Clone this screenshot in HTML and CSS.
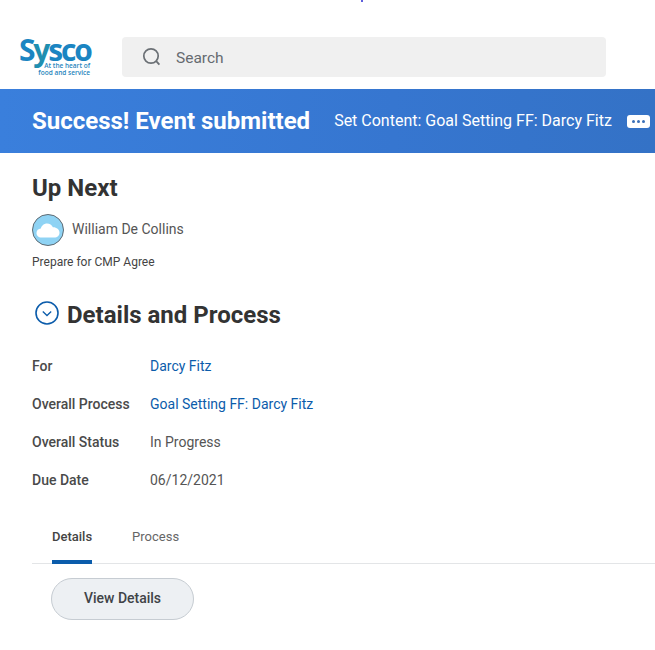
FILE: index.html
```html
<!DOCTYPE html>
<html lang="en">
<head>
<meta charset="utf-8">
<title>Success</title>
<link rel="stylesheet" href="styles.css">
</head>
<body>
<div class="page">
  <span class="speck"></span>
  <header class="top">
    <div class="logo">
      <div class="logo-word"><span class="logo-s">S</span><span class="logo-y">y</span><span class="logo-s2">sco</span></div>
      <div class="logo-tag">At the heart of<br>food and service</div>
    </div>
    <div class="search">
      <svg class="search-icon" width="20" height="20" viewBox="0 0 20 20" fill="none"><circle cx="9" cy="9" r="7.2" stroke="#6b7075" stroke-width="1.7"/><path d="M14.2 14.2L17.4 17.6" stroke="#6b7075" stroke-width="1.8"/></svg>
      <span class="search-text">Search</span>
    </div>
  </header>
  <section class="banner">
    <h1 class="banner-title">Success! Event submitted</h1>
    <span class="banner-sub">Set Content: Goal Setting FF: Darcy Fitz</span>
    <span class="more"><i></i><i></i><i></i></span>
  </section>
  <main class="content">
    <h2 class="upnext">Up Next</h2>
    <div class="person">
      <span class="avatar">
        <svg width="24" height="16" viewBox="0 0 24 16"><path d="M5.5 15.5C2.4 15.5.5 13.4.5 11c0-2.500 1.900-4.300 4.300-4.400C5.500 3.700 8 1.500 11 1.500c2.700 0 4.900 1.500 5.900 3.800 3.400-.2 6.600 2.100 6.600 5.400 0 2.800-2.200 4.800-5 4.800z" fill="#fff"/></svg>
      </span>
      <span class="person-name">William De Collins</span>
    </div>
    <p class="prepare">Prepare for CMP Agree</p>
    <div class="section-head">
      <svg class="chev" width="24" height="24" viewBox="0 0 24 24" fill="none"><circle cx="12" cy="12" r="11" stroke="#0b5cab" stroke-width="1.6"/><path d="M7.800 10.500L12 14.500L16.200 10.500" stroke="#0b5cab" stroke-width="1.300"/></svg>
      <h2 class="section-title">Details and Process</h2>
    </div>
    <dl class="fields">
      <div class="field"><dt>For</dt><dd><a class="link">Darcy Fitz</a></dd></div>
      <div class="field"><dt>Overall Process</dt><dd><a class="link">Goal Setting FF: Darcy Fitz</a></dd></div>
      <div class="field"><dt>Overall Status</dt><dd>In Progress</dd></div>
      <div class="field"><dt>Due Date</dt><dd>06/12/2021</dd></div>
    </dl>
    <nav class="tabs">
      <span class="tab active">Details</span>
      <span class="tab">Process</span>
    </nav>
    <button class="btn">View Details</button>
  </main>
</div>
</body>
</html>
```
FILE: styles.css
```css
* { box-sizing: border-box; }
html, body { margin: 0; padding: 0; background: #fff; }
body { font-family: Roboto, "Liberation Sans", sans-serif; color: #333; overflow: hidden; }
.page { position: relative; width: 655px; height: 650px; overflow: hidden; }
.speck { position: absolute; left: 361px; top: 0; width: 2px; height: 2px; background: #2a2ad0; border-radius: 50%; }

.top { height: 89px; display: flex; align-items: flex-start; padding: 37px 0 0 19px; }
.logo { width: 103px; flex: none; }
.logo-word { font-family: "Open Sans", sans-serif; font-weight: 700; font-size: 30px; line-height: 25px; letter-spacing: -2.2px; color: #1b85c2; height: 25px; }
.logo-y { color: #1f8fb0; }
.logo-tag { width: 71px; text-align: right; font-family: "Open Sans", sans-serif; font-weight: 600; font-size: 6.500px; line-height: 7px; color: #2a86bd; }

.search { width: 484px; height: 40px; background: #f0f0f0; border-radius: 4px; display: flex; align-items: center; padding-left: 20px; }
.search-icon { flex: none; }
.search-text { margin-left: 14px; font-size: 15.500px; line-height: 20px; padding-top: 1px; color: #666b70; }

.banner { height: 64px; background: linear-gradient(90deg, #3a7fdc 0%, #3676d0 60%, #3472c6 100%); display: flex; align-items: center; padding-left: 32px; color: #fff; }
.banner-title { margin: 0; font-size: 24px; font-weight: 700; line-height: 1; white-space: nowrap; }
.banner-sub { margin-left: 24px; padding-bottom: 1px; font-size: 16px; font-weight: 400; white-space: nowrap; }
.more { margin-left: 15px; width: 23px; height: 13px; background: #fff; border-radius: 3px; display: flex; align-items: center; justify-content: center; gap: 2px; flex: none; }
.more i { width: 3px; height: 3px; border-radius: 50%; background: #3a6fb8; }

.content { padding: 22px 0 0 32px; }
.upnext { margin: 0; font-size: 24px; line-height: 27px; font-weight: 700; color: #333; }
.person { display: flex; align-items: center; margin-top: 12px; }
.avatar { width: 32px; height: 32px; border-radius: 50%; background: #8fd3f4; border: 1px solid #5f6a72; display: flex; align-items: center; justify-content: center; flex: none; }
.person-name { margin-left: 8px; padding-bottom: 2px; font-size: 14px; color: #555; }
.prepare { margin: 9px 0 0; font-size: 12px; line-height: 15px; color: #444; }

.section-head { display: flex; align-items: center; margin-top: 29px; padding-left: 3px; }
.section-title { margin: 0 0 0 8px; font-size: 24px; line-height: 32px; font-weight: 700; color: #333; white-space: nowrap; }
.chev { flex: none; margin-top: -4px; }

.fields { margin: 16px 0 0; }
.field { display: flex; height: 38px; align-items: center; font-size: 14px; }
.field dt { width: 118px; font-weight: 500; color: #4a4a4a; }
.field dd { margin: 0; color: #555; }
.link { color: #0b5cab; }

.tabs { display: flex; gap: 40px; margin-top: 20px; height: 45px; padding-left: 20px; border-bottom: 1px solid #e3e5e7; }
.tab { font-size: 13px; color: #666; height: 45px; padding-top: 10px; }
.tab.active { color: #444; font-weight: 500; border-bottom: 4px solid #0b5cab; }

.btn { display: block; margin: 14px 0 0 19px; padding-bottom: 3px; width: 143px; height: 42px; border-radius: 21px; background: #edf0f3; border: 1px solid #c6ccd2; font-family: Roboto, sans-serif; font-size: 14px; font-weight: 500; color: #404347; }
```
